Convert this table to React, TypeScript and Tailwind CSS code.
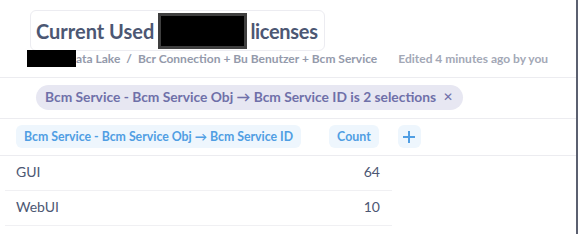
import React from 'react';

const rows = [
  { name: 'GUI', count: 64 },
  { name: 'WebUI', count: 10 },
];

function App() {
  return (
    <div className="w-[582px] h-[251px] bg-white font-['Lato',sans-serif]">
      <div className="w-[578px] h-[234px] border-r-2 border-[#5b6070]">
        <div className="pl-[30px] pt-[10px]">
          <div className="inline-flex items-center h-[41px] pl-[5px] pr-[6px] border border-[#ececf1] rounded-md text-[20px] font-bold text-[#4c5773]">
            <span>Current Used</span>
            <span className="inline-block w-[89px] h-[36px] ml-[4px] mr-[3px] bg-black border-[3px] border-[#3f3f3f]"></span>
            <span className="tracking-[-0.3px]">licenses</span>
          </div>
        </div>
        <div className="flex items-center h-[18px] -mt-[1px] pl-[27px] text-[12px] font-bold text-[#949aab]">
          <span className="inline-block w-[49px] h-[17px] -mt-[2px] bg-black"></span>
          <span>ata Lake</span>
          <span className="mx-[6px]">/</span>
          <span>Bcr Connection + Bu Benutzer + Bcm Service</span>
          <span className="ml-[21px] text-[#a3a8b6]">Edited 4 minutes ago by you</span>
        </div>
        <div className="mt-[9px] border-t border-[#ececf0]"></div>
        <div className="pl-[36px] pt-[6px] pb-[8px]">
          <div className="inline-flex items-center h-[25px] pl-[9px] pr-[10px] rounded-full bg-[#e7e7f2] text-[13.8px] font-bold text-[#6f70a9]">
            <span>Bcm Service - Bcm Service Obj → Bcm Service ID is 2 selections</span>
            <span className="ml-[7px] text-[12px] font-normal">✕</span>
          </div>
        </div>
        <div className="border-t border-[#ececf0]"></div>
        <div className="flex items-center h-[36px] pl-[16px]">
          <div className="flex items-center h-[23px] px-[8px] rounded-md bg-[#eef6fd] text-[12.3px] font-bold text-[#509ee3]">
            Bcm Service - Bcm Service Obj → Bcm Service ID
          </div>
          <div className="flex items-center h-[23px] px-[8px] ml-[28px] rounded-md bg-[#eef6fd] text-[12.4px] font-bold text-[#509ee3]">
            Count
          </div>
          <div className="flex items-center justify-center w-[23px] h-[23px] ml-[19px] rounded-md bg-[#eef6fd] text-[#509ee3]">
            <svg width="14" height="14" viewBox="0 0 14 14">
              <path d="M7 1v12M1 7h12" stroke="currentColor" strokeWidth="2" />
            </svg>
          </div>
        </div>
        <div className="border-t border-[#ececf0]"></div>
        <div className="w-[392px] pl-[5px]">
          {rows.map((r) => (
            <div key={r.name} className="flex items-center justify-between h-[35px] pb-[2px] pl-[11px] pr-[12px] border-b border-[#f0f0f3] text-[14px] font-normal text-[#4c5773]">
              <span>{r.name}</span>
              <span>{r.count}</span>
            </div>
          ))}
        </div>
      </div>
    </div>
  );
}

export default App;
